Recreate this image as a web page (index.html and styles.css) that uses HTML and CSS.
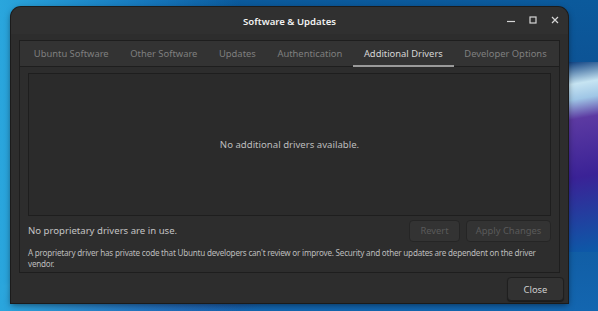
FILE: index.html
```html
<!DOCTYPE html>
<html lang="en">
<head>
    <meta charset="UTF-8">
    <title>Software &amp; Updates</title>
    <link rel="stylesheet" href="styles.css">
</head>
<body>
    <div class="desktop">
        <div class="window">
            <div class="titlebar">
                <span class="title">Software &amp; Updates</span>
                <div class="controls">
                    <svg width="10" height="10" viewBox="0 0 10 10"><path d="M1 6.5h8" stroke="#d6d6d6" stroke-width="1.2"/></svg>
                    <svg width="10" height="10" viewBox="0 0 10 10"><rect x="2" y="2" width="6" height="6" fill="none" stroke="#d6d6d6" stroke-width="1.2"/></svg>
                    <svg width="10" height="10" viewBox="0 0 10 10"><path d="M2 2l6 6M8 2l-6 6" stroke="#d6d6d6" stroke-width="1.2"/></svg>
                </div>
            </div>

            <div class="notebook">
                <div class="tabs">
                    <span class="tab">Ubuntu Software</span>
                    <span class="tab">Other Software</span>
                    <span class="tab">Updates</span>
                    <span class="tab">Authentication</span>
                    <span class="tab active">Additional Drivers</span>
                    <span class="tab">Developer Options</span>
                </div>
                <div class="page">
                    <div class="driver-list">
                        <p>No additional drivers available.</p>
                    </div>
                    <div class="status-row">
                        <span class="status">No proprietary drivers are in use.</span>
                        <div class="buttons">
                            <button class="btn revert" disabled>Revert</button>
                            <button class="btn wide" disabled>Apply Changes</button>
                        </div>
                    </div>
                    <p class="note">A proprietary driver has private code that Ubuntu developers can't review or improve. Security and other updates are dependent on the driver vendor.</p>
                </div>
            </div>

            <div class="actions">
                <button class="btn close">Close</button>
            </div>
        </div>
    </div>
</body>
</html>
```

FILE: styles.css
```css
* {
    margin: 0;
    padding: 0;
    box-sizing: border-box;
    font-family: 'Noto Sans', 'DejaVu Sans', sans-serif;
}

body {
    width: 598px;
    height: 311px;
    overflow: hidden;
}

.desktop {
    width: 598px;
    height: 311px;
    padding: 7px 0 0 11px;
    background:
        linear-gradient(165deg, transparent 60%, rgba(190, 230, 245, 0.9) 61%, rgba(80, 40, 140, 0.9) 64%, transparent 80%),
        linear-gradient(180deg, #0b5a9c 0%, #0e4d8f 40%, #1366b0 100%);
    background-color: #0e4d8f;
    position: relative;
}

.desktop::before {
    content: '';
    position: absolute;
    left: 0;
    top: 0;
    width: 240px;
    height: 311px;
    background: linear-gradient(90deg, #2aa6dd 0%, rgba(30, 140, 210, 0.6) 60%, transparent 100%);
}

.desktop::after {
    content: '';
    position: absolute;
    right: 0;
    top: 62px;
    width: 32px;
    height: 190px;
    background: linear-gradient(170deg, #0c3f80 0%, #c6e4f2 12%, #9fc6e6 20%, #5c3aa2 30%, #3a2296 60%, #0c5aa8 100%);
}

.window {
    position: relative;
    z-index: 1;
    width: 557px;
    height: 296px;
    background: #2d2d2d;
    border-radius: 10px 10px 0 0;
    box-shadow: 0 0 0 1px #1b1b1b, 0 2px 6px rgba(0, 0, 0, 0.5);
    display: flex;
    flex-direction: column;
    color: #d4d4d4;
}

.titlebar {
    height: 27px;
    display: flex;
    align-items: center;
    justify-content: center;
    position: relative;
    background: #303030;
    border-radius: 10px 10px 0 0;
}

.title {
    font-size: 9.6px;
    font-weight: 600;
    color: #f2f2f2;
    margin-top: 1px;
}

.controls {
    position: absolute;
    right: 8px;
    top: 8px;
    display: flex;
    gap: 12px;
}

.notebook {
    margin: 6px 8px 0 8px;
    height: 233px;
    border: 1px solid #1e1e1e;
    display: flex;
    flex-direction: column;
}

.tabs {
    height: 26px;
    display: flex;
    align-items: center;
    padding-left: 3px;
    background: #333333;
    border-bottom: 1px solid #1e1e1e;
}

.tab {
    font-size: 9.4px;
    color: #7f7f7f;
    padding: 0 10.8px;
    height: 26px;
    line-height: 26px;
    white-space: nowrap;
}

.tab.active {
    color: #d6d6d6;
    box-shadow: inset 0 -2px 0 #9a9a9a;
}

.page {
    flex: 1;
    padding: 6px 8px 0 8px;
    display: flex;
    flex-direction: column;
    background: #2d2d2d;
}

.driver-list {
    height: 143px;
    border: 1px solid #1e1e1e;
    background: #2b2b2b;
    display: flex;
    align-items: center;
    justify-content: center;
}

.driver-list p {
    font-size: 9.6px;
    color: #bdbdbd;
}

.status-row {
    display: flex;
    justify-content: space-between;
    align-items: center;
    margin-top: 3px;
    height: 23px;
}

.status {
    font-size: 9.6px;
    color: #c4c4c4;
}

.buttons {
    display: flex;
    gap: 6px;
}

.btn {
    height: 22px;
    padding: 0 8px;
    font-size: 9.4px;
    white-space: nowrap;
    background: #333333;
    color: #5a5a5a;
    border: 1px solid #252525;
    border-radius: 4px;
}

.btn.revert {
    width: 51px;
}

.btn.wide {
    width: 85px;
}

.note {
    margin-top: 5px;
    font-size: 8.1px;
    letter-spacing: -0.22px;
    line-height: 11px;
    color: #bcbcbc;
}

.actions {
    display: flex;
    justify-content: flex-end;
    padding: 4px 4px 0 0;
}

.btn.close {
    width: 57px;
    height: 24px;
    color: #cfcfcf;
    background: #323232;
    border-color: #1f1f1f;
    box-shadow: 0 1px 1px rgba(0, 0, 0, 0.4);
}
```
